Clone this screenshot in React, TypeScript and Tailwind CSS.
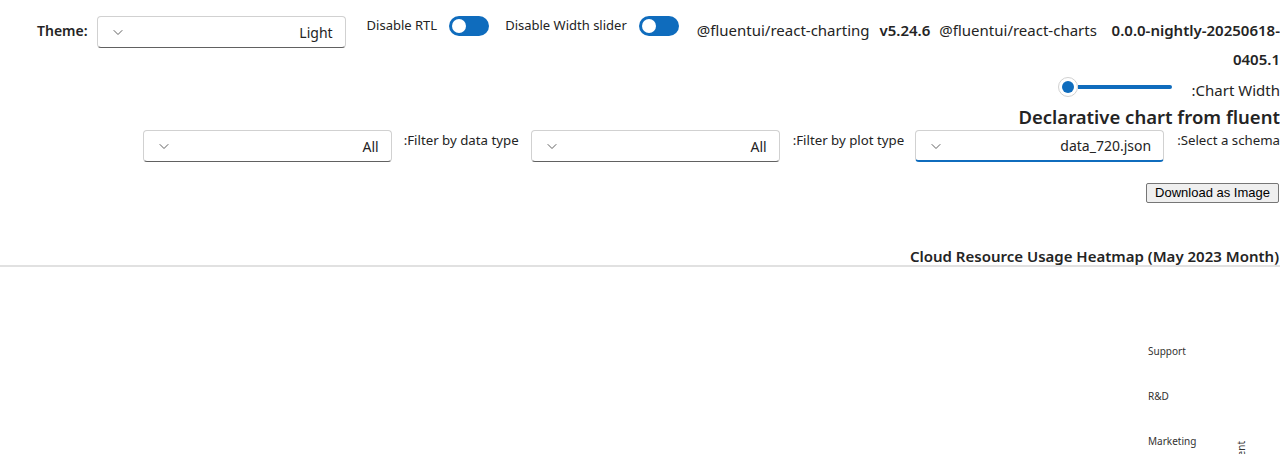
import React from "react";

const font = { fontFamily: '"Noto Sans", "Open Sans", sans-serif' };

function Chevron() {
  return (
    <svg width="12" height="12" viewBox="0 0 12 12" fill="none">
      <path d="M2 4.5 L6 8.5 L10 4.5" stroke="#616161" strokeWidth="1" strokeLinecap="round" strokeLinejoin="round" />
    </svg>
  );
}

function Dropdown({ value, active = false }: { value: string; active?: boolean }) {
  return (
    <div
      dir="ltr"
      className={`w-[249px] h-[32px] shrink-0 flex items-center justify-between pl-[14px] pr-[12px] rounded-[4px] border border-[#d1d1d1] bg-white ${
        active ? "border-b-2 border-b-[#0f6cbd]" : "border-b-[#616161]"
      }`}
    >
      <Chevron />
      <span className="text-[14px] text-[#242424]">{value}</span>
    </div>
  );
}

function Toggle() {
  return (
    <div className="w-[40px] h-[20px] shrink-0 rounded-full bg-[#0f6cbd] flex items-center pl-[3px]">
      <div className="w-[14px] h-[14px] rounded-full bg-white" />
    </div>
  );
}

function Slider() {
  return (
    <div dir="ltr" className="flex items-center w-[114px]">
      <div className="w-[20px] h-[20px] rounded-full bg-white border border-[#d1d1d1] flex items-center justify-center shrink-0">
        <div className="w-[12px] h-[12px] rounded-full bg-[#0f6cbd]" />
      </div>
      <div className="h-[4px] flex-1 bg-[#0f6cbd] rounded-r-full" />
    </div>
  );
}

export default function App() {
  return (
    <div className="w-[1280px] h-[454px] overflow-hidden bg-white text-[#242424]" style={font}>
      {/* top controls */}
      <div className="flex items-start pt-[16px]">
        <div className="ml-[37px] mr-[9px] text-[14px] font-semibold leading-[30px]">Theme:</div>
        <Dropdown value="Light" />
        <div className="flex items-center ml-[21px] h-[20px]">
          <span className="text-[13px] mr-[12px]">Disable RTL</span>
          <Toggle />
        </div>
        <div className="flex items-center ml-[16px] h-[20px]">
          <span className="text-[13px] mr-[12px]">Disable Width slider</span>
          <Toggle />
        </div>
        <div className="flex items-start ml-[18px] flex-1 text-[15px] leading-[29px]">
          <span className="mr-[10px] shrink-0 whitespace-nowrap">@fluentui/react-charting</span>
          <span className="mr-[9px] shrink-0 font-semibold">v5.24.6</span>
          <span className="mr-[10px] shrink-0 whitespace-nowrap">@fluentui/react-charts</span>
          <span className="flex-1 min-w-0 font-semibold text-right">0.0.0-nightly-20250618-0405.1</span>
        </div>
      </div>

      {/* chart width + title */}
      <div dir="rtl">
        <div className="flex items-center mt-[2px] h-[22px]">
          <span className="text-[15px] ml-[20px] mt-[6px]">Chart Width:</span>
          <Slider />
        </div>
        <div className="text-[18.5px] font-semibold leading-[26px] mt-[6px]">Declarative chart from fluent</div>

        {/* filters */}
        <div className="flex items-start">
          <span className="text-[13.25px] leading-[20px] ml-[13px]">Select a schema:</span>
          <Dropdown value="data_720.json" active />
          <span className="text-[13.25px] leading-[20px] mr-[11px] ml-[13px]">Filter by plot type:</span>
          <Dropdown value="All" />
          <span className="text-[13.25px] leading-[20px] mr-[12px] ml-[12px]">Filter by data type:</span>
          <Dropdown value="All" />
        </div>

        <div className="flex mt-[21px] pr-[1px]">
          <button
            className="h-[20px] px-[8px] text-[13px] leading-[18px] bg-[#efefef] border border-[#767676] rounded-[2px] text-black"
            style={{ fontFamily: '"Liberation Sans", Arial, sans-serif' }}
          >
            Download as Image
          </button>
        </div>

        <div className="mt-[43px] text-[15px] font-semibold leading-[20px] pr-[1px]">
          Cloud Resource Usage Heatmap (May 2023 Month)
        </div>
      </div>
      <div className="h-[2px] bg-[#e1e1e1] mt-[-1px]" />

      {/* chart area */}
      <svg width="1280" height="260" className="block">
        <g fontSize="10" fill="#323130" style={font}>
          <text x="1148" y="88">Support</text>
          <text x="1148" y="133">R&amp;D</text>
          <text x="1148" y="178">Marketing</text>
          <text x="1245" y="174" transform="rotate(-90 1245 174)" textAnchor="end">Department</text>
        </g>
      </svg>
    </div>
  );
}
